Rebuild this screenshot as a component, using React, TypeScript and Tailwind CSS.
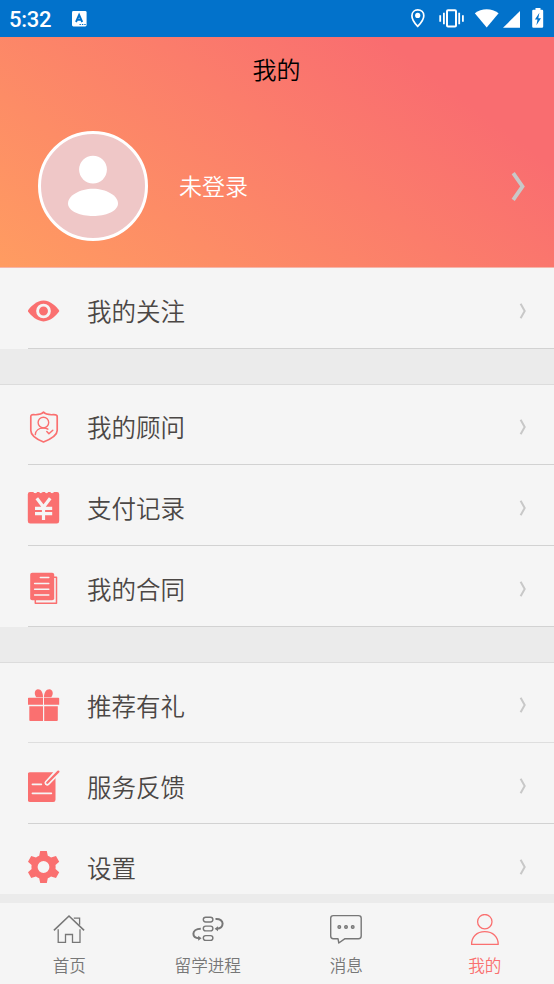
import React from 'react';

interface MenuItem {
  label: string;
  icon: React.ReactNode;
  line?: string;
}

interface TabItem {
  label: string;
  icon: React.ReactNode;
  active?: boolean;
}

const CORAL = '#fa7070';
const PAPER = '#f5f5f5';

const EyeIcon = () => (
  <svg width="32" height="32" viewBox="0 0 32 32">
    <path d="M-.4 16C2.2 12 8.6 5.6 15.5 5.6S28.8 12 31.4 16C28.8 20 22.4 26.4 15.5 26.4S2.2 20 -.4 16z" fill={CORAL} />
    <circle cx="15.5" cy="16" r="5.9" fill={CORAL} stroke={PAPER} strokeWidth="2.9" />
  </svg>
);

const AdvisorIcon = () => (
  <svg width="32" height="32" viewBox="0 0 32 32" fill="none" stroke={CORAL} strokeLinecap="round" strokeLinejoin="round">
    <path
      d="M15.5 1.2C13.6 3.2 9.5 4 5.2 3.6C3.6 3.6 2.8 4.2 2.8 5.6V19.5C2.8 24.5 9.5 28.6 15.5 31C21.5 28.6 29.2 24.5 29.2 19.5V5.6C29.2 4.2 27.5 3.6 25.8 3.6C21.5 4 17.4 3.2 15.5 1.2z"
      strokeWidth="1.7"
    />
    <circle cx="15.4" cy="11.6" r="5.3" strokeWidth="1.4" />
    <path d="M7.3 23.6C7.6 19.4 11 17 15.3 17C17 17 18.6 17.3 19.9 18.2" strokeWidth="1.4" />
    <path d="M18.8 20.6L20.9 22.8L24.8 19.2" strokeWidth="1.5" />
  </svg>
);

const PaymentIcon = () => (
  <svg width="32" height="32" viewBox="0 0 32 32" className="overflow-visible">
    <path
      d="M2 0H5.4C5.8 1.6 8.6 1.6 9 0H11.3C11.7 1.6 14.1 1.6 14.5 0H17C17.4 1.6 19.8 1.6 20.2 0H22.4C22.8 1.6 25.4 1.6 25.8 0H29Q31.2 0 31.2 2.2V29Q31.2 31.5 28.8 31.5H2.2Q-.2 31.5 -.2 29V2.2Q-.2 0 2 0z"
      fill={CORAL}
    />
    <path d="M8.8 6.2L15.5 15L22.2 6.2M7 16.4H24.2M7 21.6H24.2M15.5 14V28" fill="none" stroke={PAPER} strokeWidth="3.2" />
  </svg>
);

const ContractIcon = () => (
  <svg width="32" height="32" viewBox="0 0 32 32" className="overflow-visible">
    <path d="M25 4.2H28.5V30.2H7.3V26" fill="none" stroke={CORAL} strokeWidth="1.5" strokeLinejoin="round" />
    <rect x="2.2" y="-.2" width="24" height="27.4" rx="2" fill={CORAL} />
    <path d="M12.3 4.6H20.8M6.6 10.4H20.8M6.6 16.2H20.8M6.6 22H20.8" stroke={PAPER} strokeWidth="1.5" strokeLinecap="round" />
  </svg>
);

const GiftIcon = () => (
  <svg width="32" height="32" viewBox="0 0 32 32" fill={CORAL}>
    <path d="M15 8.2H8.3C5.8 5 6.4 .5 10 .2C13.2 .2 15 3.6 15 8.2z" />
    <path d="M16 8.2H23.2C25.8 5 25 .5 21.4 .2C18 .2 16 3.6 16 8.2z" />
    <path d="M.8 8.7H15V15.8H-.2V9.6Q-.2 8.7 .8 8.7zM16 8.7H30.3Q31.2 8.7 31.2 9.6V15.8H16z" />
    <path d="M1.3 17.2H15V32H2.2Q1.3 32 1.3 31zM16.2 17.2H29.8V31Q29.8 32 28.9 32H16.2z" />
  </svg>
);

const FeedbackIcon = () => (
  <svg width="32" height="32" viewBox="0 0 32 32">
    <path d="M2 2.2H25.2L17.3 11.5V15H20.5L27.5 7.6V29.8Q27.5 32 25.3 32H2Q-.2 32 -.2 29.8V4.4Q-.2 2.2 2 2.2z" fill={CORAL} />
    <path d="M19.3 12.8L31.2 .8" stroke={PAPER} strokeWidth="5.4" strokeLinecap="round" />
    <path d="M19.3 12.8L30.3 1.6" stroke={CORAL} strokeWidth="2.3" strokeLinecap="round" />
    <path d="M4.4 14.4H13.4M4.4 23.4H23.4" stroke={PAPER} strokeWidth="1.6" strokeLinecap="round" />
  </svg>
);

const GearIcon = () => (
  <svg width="32" height="32" viewBox="0 0 32 32" fill={CORAL}>
    <path
      fillRule="evenodd"
      d="M12.2 0H18.8L19.8 4.7Q21.6 5.4 23 6.6L28 5L31.2 10.8L27.5 14Q27.8 16 27.5 18L31.2 21.2L28 27L23 25.4Q21.6 26.6 19.8 27.3L18.8 32H12.2L11.2 27.3Q9.4 26.6 8 25.4L3.2 27L0 21.2L3.6 18Q3.3 16 3.6 14L0 10.8L3.2 5L8 6.6Q9.4 5.4 11.2 4.7zM15.5 10.1A5.9 5.9 0 1 0 15.5 21.9A5.9 5.9 0 1 0 15.5 10.1z"
    />
  </svg>
);

const HomeIcon = () => (
  <svg width="32" height="32" viewBox="0 0 32 32" fill="none" stroke="currentColor" strokeWidth="1.3">
    <path d="M.9 16.3L16 2L31.1 16.3" strokeWidth="1.6" />
    <path d="M5.2 15.2V28.4H12.5V20.5H19.5V28.4H27V15.2M20.8 4.1H26.6V10.8" />
  </svg>
);

const ProgressIcon = () => (
  <svg width="32" height="32" viewBox="0 0 32 32" fill="none" stroke="currentColor">
    <g strokeWidth="1.4">
      <rect x="11.3" y="3.2" width="9.6" height="4.8" rx="2.4" />
      <rect x="11.3" y="12.1" width="9.6" height="4.8" rx="2.4" />
      <rect x="11.3" y="21.6" width="9.6" height="4.8" rx="2.4" />
    </g>
    <path d="M23.5 5C28 4.6 30.6 6.8 30.6 9.6C30.6 12.4 28.6 14.7 25 14.7M8.8 14.7C4 14.7 1.4 17 1.4 19.8C1.4 22.5 3.6 24.2 7 24.2" strokeWidth="2" />
    <path d="M26 12.2L22.6 14.7L26 17.2zM6.2 21.7L9.6 24.2L6.2 26.7z" fill="currentColor" stroke="none" />
  </svg>
);

const MessageIcon = () => (
  <svg width="32" height="32" viewBox="0 0 32 32" fill="none" stroke="currentColor" strokeWidth="1.4" strokeLinejoin="round">
    <path d="M3.3 1.6H28.5Q31.2 1.6 31.2 4.2V22Q31.2 24.7 28.5 24.7H15L8.8 29L8 24.7H3.3Q.7 24.7 .7 22V4.2Q.7 1.6 3.3 1.6z" />
    <g fill="#aaa" strokeWidth="1.2">
      <circle cx="9.3" cy="13" r="1.4" />
      <circle cx="16" cy="13" r="1.4" />
      <circle cx="22.7" cy="13" r="1.4" />
    </g>
  </svg>
);

const PersonIcon = () => (
  <svg width="32" height="32" viewBox="0 0 32 32" fill="none" stroke="currentColor" strokeWidth="1.3" strokeLinejoin="round">
    <circle cx="15.8" cy="7.7" r="7.2" />
    <path d="M2.6 30.4C2.6 23 7.6 17.7 15.8 17.7S29.2 23 29.2 30.4z" />
  </svg>
);

const ChevronIcon = () => (
  <svg className="mt-2" width="8" height="16" viewBox="0 0 8 16" fill="none">
    <path d="M1.6 .8L5.7 8L1.6 15.2" stroke="#c8c8c8" strokeWidth="2" />
  </svg>
);

const menuGroups: MenuItem[][] = [
  [{ label: '我的关注', icon: <EyeIcon /> }],
  [
    { label: '我的顾问', icon: <AdvisorIcon /> },
    { label: '支付记录', icon: <PaymentIcon /> },
    { label: '我的合同', icon: <ContractIcon /> },
  ],
  [
    { label: '推荐有礼', icon: <GiftIcon />, line: 'border-[#dedede]' },
    { label: '服务反馈', icon: <FeedbackIcon /> },
    { label: '设置', icon: <GearIcon />, line: 'border-transparent' },
  ],
];

const tabs: TabItem[] = [
  { label: '首页', icon: <HomeIcon /> },
  { label: '留学进程', icon: <ProgressIcon /> },
  { label: '消息', icon: <MessageIcon /> },
  { label: '我的', icon: <PersonIcon />, active: true },
];

const StatusBar = () => (
  <div className="flex h-[37px] shrink-0 items-center bg-[#0272cb] pl-[9px] text-white">
    <span className="w-[63px] pt-0.5 font-[Roboto] text-[22px] leading-[35px] font-medium tracking-[-0.3px]">5:32</span>
    <svg width="16" height="18" viewBox="0 0 16 18">
      <rect x="0" y="1" width="14.6" height="15.4" rx="1.4" fill="#fff" />
      <path d="M4 12L7.1 4.8L10.2 12M5.2 9.8H9" fill="none" stroke="#0272cb" strokeWidth="1.9" />
      <path d="M7.5 14.5H14" stroke="#0272cb" strokeWidth="1.2" strokeDasharray="1.4 1" />
    </svg>
    <svg className="ml-auto" width="144" height="22" viewBox="410 8 144 22" fill="#fff">
      <path d="M417.7 9.9C421.2 9.9 423.8 12.2 423.8 15.7C423.8 19.2 420.6 23.4 417.7 26.4C414.8 23.4 411.9 19.2 411.9 15.7C411.9 12.2 414.5 9.9 417.7 9.9z" fill="none" stroke="#fff" strokeWidth="1.7" />
      <circle cx="417.7" cy="15.4" r="2.6" />
      <rect x="447" y="10.2" width="9" height="16.4" rx="1" fill="none" stroke="#fff" strokeWidth="2" />
      <path d="M443.9 12.7V24.3M459.2 12.7V24.3M440.2 15.3V21.7M462.9 15.3V21.7" stroke="#fff" strokeWidth="1.8" />
      <path d="M474.8 13.3C481.5 7.8 491.8 7.8 498.6 13.3L486.7 27.6z" />
      <path d="M520 11V27.8H503z" />
      <path fillRule="evenodd" d="M535.5 8H540.5V9.8H542Q543.2 9.8 543.2 11V26.5Q543.2 27.8 542 27.8H533.4Q532.2 27.8 532.2 26.5V11Q532.2 9.8 533.4 9.8H535.5zM539.4 12.8L534.9 19.5H537.5L536.4 25.2L541 18.2H538.3z" />
    </svg>
  </div>
);

const ProfileHeader = () => (
  <header className="h-[231px] shrink-0 border-b border-[#f5b5aa] bg-[linear-gradient(37deg,#ff9c61_0%,#f96d70_80%,#f96d70_100%)]">
    <h1 className="pt-[14px] pr-px text-center text-[24px] leading-9 font-[350] text-black">我的</h1>
    <div className="mt-[44px] flex h-[110px] items-center pr-[28px] pl-[38px]">
      <div className="size-[110px] overflow-hidden rounded-full border-[3px] border-white bg-[#efc7c7]">
        <svg width="104" height="104" viewBox="0 0 104 104" fill="#fff">
          <circle cx="52" cy="35.6" r="13.9" />
          <path d="M27 69.5C27 61.5 39 54.7 52 54.7S77 61.5 77 69.5C77 77.5 64 82 52 82S27 77.5 27 69.5z" />
        </svg>
      </div>
      <span className="ml-[31px] pb-0.5 text-[23px] leading-8 font-[350] text-white">未登录</span>
      <svg className="ml-auto" width="16" height="32" viewBox="0 0 16 32" fill="none">
        <path d="M3.2 3.2L12.5 16.4L3.2 29.8" stroke="#c8c8c8" strokeWidth="3.8" />
      </svg>
    </div>
  </header>
);

const MenuRow = ({ item }: { item: MenuItem }) => (
  <div className={`ml-7 flex h-[81px] shrink-0 items-start border-b pt-[27px] pr-[27px] ${item.line ?? 'border-[#d2d2d2]'}`}>
    <span className="w-[59px]">{item.icon}</span>
    <span className="flex-1 text-[24.5px] leading-8 font-[350] text-[#4b4745] group-last/list:pt-px">{item.label}</span>
    <ChevronIcon />
  </div>
);

export default function App() {
  return (
    <div className="flex h-[984px] w-[554px] flex-col overflow-hidden bg-[#ebebeb] font-['Noto_Sans_CJK_SC',sans-serif]">
      <StatusBar />
      <ProfileHeader />

      <main className="flex h-[626px] shrink-0 flex-col gap-[35px] overflow-hidden">
        {menuGroups.map((group, index) => (
          <section
            key={group[0].label}
            className={`group/list shrink-0 bg-[#f5f5f5] ${index > 0 ? 'border-t border-[#dcdcdc] [&>div:first-child]:h-20 [&>div:first-child]:pt-[26px]' : ''}`}
          >
            {group.map((item) => (
              <MenuRow key={item.label} item={item} />
            ))}
          </section>
        ))}
      </main>

      {/* Bottom tabs */}
      <nav className="mt-[9px] grid h-[81px] shrink-0 grid-cols-4 bg-[#f5f5f5]">
        {tabs.map((tab) => (
          <div key={tab.label} className={`flex flex-col items-center pt-[11px] ${tab.active ? 'text-[#fa7070]' : 'text-[#777]'}`}>
            {tab.icon}
            <span className="mt-[7px] text-[16.6px] leading-6 font-[350]">{tab.label}</span>
          </div>
        ))}
      </nav>
    </div>
  );
}
